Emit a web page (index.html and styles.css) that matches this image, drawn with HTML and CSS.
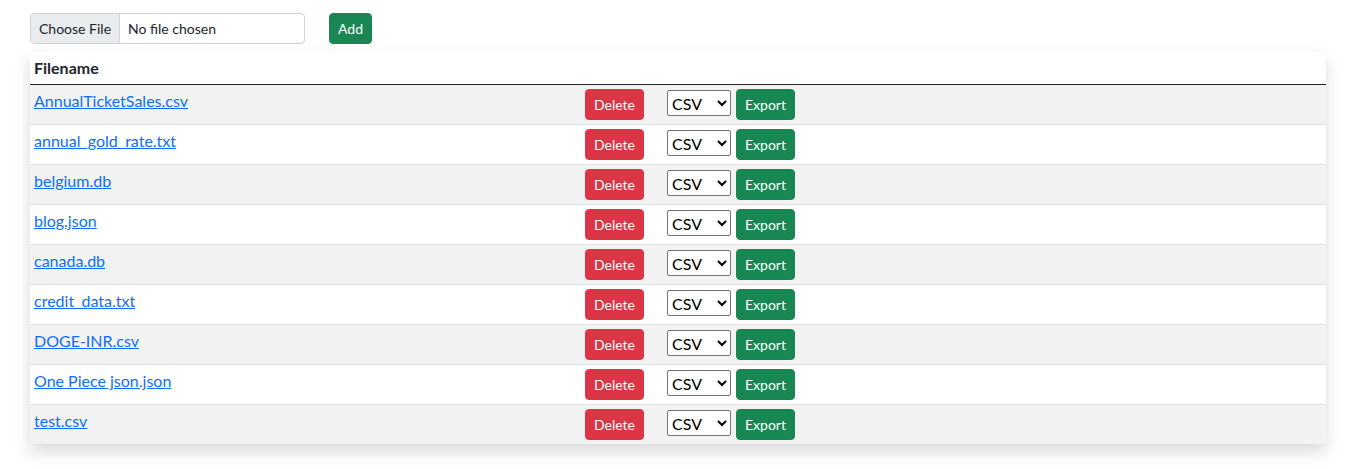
FILE: index.html
```html
<!DOCTYPE html>
<html lang="en">
<head>
<meta charset="utf-8">
<title>Files</title>
<link rel="stylesheet" href="styles.css">
</head>
<body>
<div class="page">
  <form class="upload">
    <input class="file-input" type="file">
    <button type="button" class="btn btn-success">Add</button>
  </form>
  <div class="card">
  <table class="files">
    <thead>
      <tr><th class="c-name">Filename</th><th class="c-del"></th><th class="c-exp"></th></tr>
    </thead>
    <tbody>
      <tr><td><a href="#">AnnualTicketSales.csv</a></td><td><button class="btn btn-danger">Delete</button></td><td><div class="exp"><select class="fmt"><option>CSV</option></select><button class="btn btn-success">Export</button></div></td></tr>
      <tr><td><a href="#">annual_gold_rate.txt</a></td><td><button class="btn btn-danger">Delete</button></td><td><div class="exp"><select class="fmt"><option>CSV</option></select><button class="btn btn-success">Export</button></div></td></tr>
      <tr><td><a href="#">belgium.db</a></td><td><button class="btn btn-danger">Delete</button></td><td><div class="exp"><select class="fmt"><option>CSV</option></select><button class="btn btn-success">Export</button></div></td></tr>
      <tr><td><a href="#">blog.json</a></td><td><button class="btn btn-danger">Delete</button></td><td><div class="exp"><select class="fmt"><option>CSV</option></select><button class="btn btn-success">Export</button></div></td></tr>
      <tr><td><a href="#">canada.db</a></td><td><button class="btn btn-danger">Delete</button></td><td><div class="exp"><select class="fmt"><option>CSV</option></select><button class="btn btn-success">Export</button></div></td></tr>
      <tr><td><a href="#">credit_data.txt</a></td><td><button class="btn btn-danger">Delete</button></td><td><div class="exp"><select class="fmt"><option>CSV</option></select><button class="btn btn-success">Export</button></div></td></tr>
      <tr><td><a href="#">DOGE-INR.csv</a></td><td><button class="btn btn-danger">Delete</button></td><td><div class="exp"><select class="fmt"><option>CSV</option></select><button class="btn btn-success">Export</button></div></td></tr>
      <tr><td><a href="#">One Piece json.json</a></td><td><button class="btn btn-danger">Delete</button></td><td><div class="exp"><select class="fmt"><option>CSV</option></select><button class="btn btn-success">Export</button></div></td></tr>
      <tr><td><a href="#">test.csv</a></td><td><button class="btn btn-danger">Delete</button></td><td><div class="exp"><select class="fmt"><option>CSV</option></select><button class="btn btn-success">Export</button></div></td></tr>
    </tbody>
  </table>
  </div>
</div>
</body>
</html>
```

FILE: styles.css
```css
* { box-sizing: border-box; }
html, body { margin: 0; background: #fff; }
body {
  font-family: "Lato", "Liberation Sans", Arial, sans-serif;
  font-size: 16px;
  line-height: 24px;
  color: #212529;
  min-height: 469px;
}
.page {
  width: 1296px;
  margin-left: 30px;
  padding-top: 13px;
}
.upload {
  display: flex;
  align-items: flex-start;
  gap: 24px;
  margin: 0 0 8px 0;
}
.file-input {
  display: block;
  width: 275px;
  height: 31px;
  margin: 0;
  padding: 0 8px 0 0;
  font-family: inherit;
  font-size: 14px;
  line-height: 21px;
  color: #212529;
  background: #fff;
  border: 1px solid #ced4da;
  border-radius: 4px;
  overflow: hidden;
}
.file-input::file-selector-button {
  height: 29px;
  margin: 0 8px 0 0;
  padding: 0 8px;
  font-family: inherit;
  font-size: 14px;
  color: #212529;
  background: #e9ecef;
  border: 0;
  border-right: 1px solid #ced4da;
  border-radius: 0;
}
.btn {
  display: inline-block;
  height: 31px;
  padding: 4px 8px;
  font-family: inherit;
  font-size: 14px;
  line-height: 21px;
  color: #fff;
  border: 1px solid transparent;
  border-radius: 4px;
  cursor: pointer;
}
.btn-success { background: #198754; border-color: #198754; }
.btn-danger { background: #dc3545; border-color: #dc3545; }
.card {
  box-shadow: 0 8px 16px rgba(0, 0, 0, 0.15);
}
.files {
  width: 100%;
  border-collapse: collapse;
}
.files th, .files td {
  padding: 4px;
  text-align: left;
  vertical-align: top;
}
.files th { font-weight: bold; height: 32px; border-bottom: 1px solid #212529; }
.files td { height: 40px; border-bottom: 1px solid #dee2e6; }
.files tbody tr:last-child td { border-bottom: 0; height: 39px; }
.files tbody tr:nth-child(odd) td { background: #f2f2f2; }
.c-name { width: 551px; }
.c-del { width: 82px; }
.files a { color: #0d6efd; text-decoration: underline; }
.exp { display: flex; align-items: flex-start; gap: 5px; }
.fmt {
  width: 64px;
  height: 26px;
  margin-top: 1px;
  font-family: inherit;
  font-size: 16px;
  color: #000;
  background: #fff;
  border: 1px solid #767676;
  border-radius: 2px;
}
```
